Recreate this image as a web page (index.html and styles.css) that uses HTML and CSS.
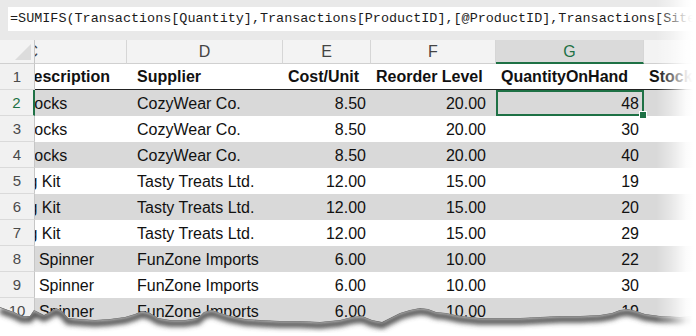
FILE: index.html
```html
<!DOCTYPE html>
<html>
<head>
<meta charset="utf-8">
<link rel="stylesheet" href="styles.css">
</head>
<body>
<div class="sheet">
  <div class="fbar">
    <div class="fbox">=SUMIFS(Transactions[Quantity],Transactions[ProductID],[@ProductID],Transactions[Site],[@Site])</div>
  </div>
  <div class="grid">
    <div class="row colhead">
      <div class="rh corner"><span class="tri"></span></div>
      <div class="cell cc"><span class="clip-col">C</span></div>
      <div class="cell cd">D</div>
      <div class="cell ce">E</div>
      <div class="cell cf">F</div>
      <div class="cell cg active">G</div>
      <div class="cell ch"></div>
    </div>

    <div class="row hdr">
      <div class="rh">1</div>
      <div class="cell cc"><span class="off-desc">Description</span></div>
      <div class="cell cd">Supplier</div>
      <div class="cell ce">Cost/Unit</div>
      <div class="cell cf">Reorder Level</div>
      <div class="cell cg">QuantityOnHand</div>
      <div class="cell ch">Stock</div>
    </div>

    <div class="row band">
      <div class="rh sel-row">2</div>
      <div class="cell cc"><span class="off-socks">Wool Socks</span></div>
      <div class="cell cd">CozyWear Co.</div>
      <div class="cell ce num">8.50</div>
      <div class="cell cf num">20.00</div>
      <div class="cell cg num selected">48<span class="handle"></span></div>
      <div class="cell ch"></div>
    </div>
    <div class="row">
      <div class="rh">3</div>
      <div class="cell cc"><span class="off-socks">Wool Socks</span></div>
      <div class="cell cd">CozyWear Co.</div>
      <div class="cell ce num">8.50</div>
      <div class="cell cf num">20.00</div>
      <div class="cell cg num">30</div>
      <div class="cell ch"></div>
    </div>
    <div class="row band">
      <div class="rh">4</div>
      <div class="cell cc"><span class="off-socks">Wool Socks</span></div>
      <div class="cell cd">CozyWear Co.</div>
      <div class="cell ce num">8.50</div>
      <div class="cell cf num">20.00</div>
      <div class="cell cg num">40</div>
      <div class="cell ch"></div>
    </div>
    <div class="row">
      <div class="rh">5</div>
      <div class="cell cc"><span class="off-kit">Baking Kit</span></div>
      <div class="cell cd">Tasty Treats Ltd.</div>
      <div class="cell ce num">12.00</div>
      <div class="cell cf num">15.00</div>
      <div class="cell cg num">19</div>
      <div class="cell ch"></div>
    </div>
    <div class="row band">
      <div class="rh">6</div>
      <div class="cell cc"><span class="off-kit">Baking Kit</span></div>
      <div class="cell cd">Tasty Treats Ltd.</div>
      <div class="cell ce num">12.00</div>
      <div class="cell cf num">15.00</div>
      <div class="cell cg num">20</div>
      <div class="cell ch"></div>
    </div>
    <div class="row">
      <div class="rh">7</div>
      <div class="cell cc"><span class="off-kit">Baking Kit</span></div>
      <div class="cell cd">Tasty Treats Ltd.</div>
      <div class="cell ce num">12.00</div>
      <div class="cell cf num">15.00</div>
      <div class="cell cg num">29</div>
      <div class="cell ch"></div>
    </div>
    <div class="row band">
      <div class="rh">8</div>
      <div class="cell cc"><span class="off-spin">Fidget Spinner</span></div>
      <div class="cell cd">FunZone Imports</div>
      <div class="cell ce num">6.00</div>
      <div class="cell cf num">10.00</div>
      <div class="cell cg num">22</div>
      <div class="cell ch"></div>
    </div>
    <div class="row">
      <div class="rh">9</div>
      <div class="cell cc"><span class="off-spin">Fidget Spinner</span></div>
      <div class="cell cd">FunZone Imports</div>
      <div class="cell ce num">6.00</div>
      <div class="cell cf num">10.00</div>
      <div class="cell cg num">30</div>
      <div class="cell ch"></div>
    </div>
    <div class="row band">
      <div class="rh">10</div>
      <div class="cell cc"><span class="off-spin">Fidget Spinner</span></div>
      <div class="cell cd">FunZone Imports</div>
      <div class="cell ce num">6.00</div>
      <div class="cell cf num">10.00</div>
      <div class="cell cg num">19</div>
      <div class="cell ch"></div>
    </div>
  </div>

  <svg class="torn" width="696" height="46" viewBox="0 290 696 46">
    <defs>
      <clipPath id="below">
        <path d="M0,307 L8,310 L14,312 L22,316 L30,316 L34,310 L38,312 L44,315 L50,312 L56,308 L62,311 L68,318 L80,319 L95,320 L110,319 L125,317 L135,314 L142,311 L150,313 L158,318 L170,320 L185,320 L198,318 L204,312 L212,310 L220,313 L230,316 L245,319 L260,320 L280,321 L300,321 L320,322 L340,320 L352,317 L362,316 L372,320 L382,322 L392,317 L400,313 L410,310 L420,308 L428,309 L436,312 L446,313 L460,316 L480,318 L500,318 L520,318 L540,317 L560,316 L580,316 L600,315 L612,313 L620,310 L628,309 L636,311 L645,314 L660,316 L680,317 L696,316 L696,336 L0,336 Z"/>
      </clipPath>
      <filter id="blur" x="-5%" y="-50%" width="110%" height="200%">
        <feGaussianBlur stdDeviation="2.6"/>
      </filter>
    </defs>
    <path fill="#fff" d="M0,307 L8,310 L14,312 L22,316 L30,316 L34,310 L38,312 L44,315 L50,312 L56,308 L62,311 L68,318 L80,319 L95,320 L110,319 L125,317 L135,314 L142,311 L150,313 L158,318 L170,320 L185,320 L198,318 L204,312 L212,310 L220,313 L230,316 L245,319 L260,320 L280,321 L300,321 L320,322 L340,320 L352,317 L362,316 L372,320 L382,322 L392,317 L400,313 L410,310 L420,308 L428,309 L436,312 L446,313 L460,316 L480,318 L500,318 L520,318 L540,317 L560,316 L580,316 L600,315 L612,313 L620,310 L628,309 L636,311 L645,314 L660,316 L680,317 L696,316 L696,336 L0,336 Z"/>
    <g clip-path="url(#below)">
      <path fill="none" stroke="#4a4a4a" stroke-width="6" filter="url(#blur)" transform="translate(0,3.5)" d="M0,307 L8,310 L14,312 L22,316 L30,316 L34,310 L38,312 L44,315 L50,312 L56,308 L62,311 L68,318 L80,319 L95,320 L110,319 L125,317 L135,314 L142,311 L150,313 L158,318 L170,320 L185,320 L198,318 L204,312 L212,310 L220,313 L230,316 L245,319 L260,320 L280,321 L300,321 L320,322 L340,320 L352,317 L362,316 L372,320 L382,322 L392,317 L400,313 L410,310 L420,308 L428,309 L436,312 L446,313 L460,316 L480,318 L500,318 L520,318 L540,317 L560,316 L580,316 L600,315 L612,313 L620,310 L628,309 L636,311 L645,314 L660,316 L680,317 L696,316"/>
      <path fill="none" stroke="#6a6a6a" stroke-width="1.2" d="M0,307 L8,310 L14,312 L22,316 L30,316 L34,310 L38,312 L44,315 L50,312 L56,308 L62,311 L68,318 L80,319 L95,320 L110,319 L125,317 L135,314 L142,311 L150,313 L158,318 L170,320 L185,320 L198,318 L204,312 L212,310 L220,313 L230,316 L245,319 L260,320 L280,321 L300,321 L320,322 L340,320 L352,317 L362,316 L372,320 L382,322 L392,317 L400,313 L410,310 L420,308 L428,309 L436,312 L446,313 L460,316 L480,318 L500,318 L520,318 L540,317 L560,316 L580,316 L600,315 L612,313 L620,310 L628,309 L636,311 L645,314 L660,316 L680,317 L696,316"/>
    </g>
  </svg>
  <div class="fade"></div>
</div>
</body>
</html>
```

FILE: styles.css
```css
html, body {
  margin: 0;
  padding: 0;
  background: #fff;
}

.sheet {
  position: relative;
  width: 696px;
  height: 336px;
  overflow: hidden;
  font-family: "Liberation Sans", Arial, sans-serif;
  color: #111;
}

.fbar {
  height: 40px;
  box-sizing: border-box;
  padding: 7px 0 0 8px;
  background: #e9e9e9;
}

.fbox {
  height: 24px;
  box-sizing: border-box;
  padding-left: 2px;
  background: #fff;
  font-family: "Liberation Mono", "DejaVu Sans Mono", monospace;
  font-size: 13.45px;
  line-height: 24px;
  color: #1b1b1b;
  white-space: nowrap;
  overflow: hidden;
}

.row {
  display: flex;
  height: 26px;
}

.row.band .cell {
  background: #d9d9d9;
}

.rh {
  flex: 0 0 35px;
  box-sizing: border-box;
  background: #f1f1f1;
  border-right: 1px solid #c6c6c6;
  border-bottom: 1px solid #dadada;
  text-align: center;
  font-size: 15px;
  line-height: 26px;
  color: #4a4a4a;
}

.rh.sel-row {
  color: #1e7145;
  border-right: 2px solid #1e7145;
}

.cell {
  box-sizing: border-box;
  font-size: 16px;
  line-height: 25px;
  padding: 1px 5px 0 5px;
  white-space: nowrap;
  overflow: hidden;
}

.cc { flex: 0 0 92px; padding-left: 0; padding-right: 0; }
.cd { flex: 0 0 156px; padding-left: 10px; }
.ce { flex: 0 0 88px; }
.cf { flex: 0 0 125px; }
.cg { flex: 0 0 148px; }
.ch { flex: 0 0 100px; }

.num { text-align: right; }
.cf.num { padding-right: 10px; }

.off-desc { display: inline-block; margin-left: -13px; }
.off-socks { display: inline-block; margin-left: -52px; }
.off-kit { display: inline-block; margin-left: -46.5px; }
.off-spin { display: inline-block; margin-left: -45px; }
.clip-col { display: inline-block; margin-left: -8.5px; }

/* column letters */
.colhead {
  height: 24px;
  background: #f3f3f3;
}
.colhead .rh {
  line-height: 24px;
  background: #f3f3f3;
  border-bottom: 1px solid #d0d0d0;
  position: relative;
}
.colhead .cell {
  text-align: center;
  color: #444;
  line-height: 23px;
  padding: 0;
  background: #f3f3f3;
  border-right: 1px solid #d6d6d6;
  border-bottom: 1px solid #d0d0d0;
}
.colhead .cc { text-align: left; }
.colhead .cell.active {
  background: #dadada;
  color: #1e7145;
  border-bottom: 2px solid #1e7145;
}
.tri {
  position: absolute;
  right: 3px;
  bottom: 3px;
  width: 0;
  height: 0;
  border-left: 16px solid transparent;
  border-bottom: 16px solid #dcdcdc;
}

/* table header row */
.hdr .cell {
  font-weight: bold;
  border-bottom: 1px solid #222;
  line-height: 24px;
}

/* active cell */
.cell.selected {
  position: relative;
  overflow: visible;
  box-shadow: inset 0 0 0 2px #1e7145;
}
.handle {
  position: absolute;
  right: -3px;
  bottom: -3px;
  width: 6px;
  height: 6px;
  background: #1e7145;
  border: 1px solid #fff;
  z-index: 2;
}

.torn {
  position: absolute;
  left: 0;
  bottom: 0;
  display: block;
}

.fade {
  position: absolute;
  top: 0;
  right: 0;
  width: 40px;
  height: 336px;
  background: linear-gradient(to right, rgba(255,255,255,0) 0%, rgba(255,255,255,0.35) 35%, rgba(255,255,255,0.9) 75%, #fff 92%);
}
```
